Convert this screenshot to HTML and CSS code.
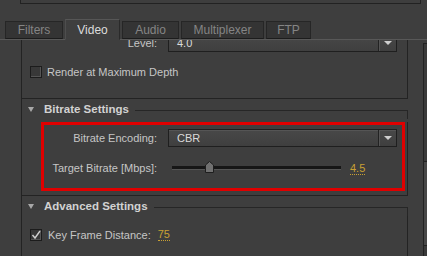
FILE: index.html
```html
<!DOCTYPE html>
<html lang="en">
<head>
    <meta charset="UTF-8">
    <meta name="viewport" content="width=device-width, initial-scale=1.0">
    <title>Export Settings - Video</title>
    <link rel="stylesheet" href="styles.css">
</head>
<body>
    <div class="window">
        <div class="top-box"></div>

        <div class="tabs">
            <div class="tab tab-filters">Filters</div>
            <div class="tab tab-video active">Video</div>
            <div class="tab tab-audio">Audio</div>
            <div class="tab tab-mux">Multiplexer</div>
            <div class="tab tab-ftp">FTP</div>
        </div>

        <div class="panel">
            <div class="scroll">
                <div class="section first">
                    <div class="field">
                        <span class="label wide">Level:</span>
                        <div class="select"><span class="select-value">4.0</span><span class="select-btn"><i class="arrow"></i></span></div>
                    </div>
                    <div class="check-row render-row">
                        <span class="checkbox"></span>
                        <span class="check-label">Render at Maximum Depth</span>
                    </div>
                </div>

                <div class="section">
                    <div class="section-head">
                        <span class="twisty"></span>
                        <span class="section-title">Bitrate Settings</span>
                        <span class="rule"></span>
                    </div>
                    <div class="section-body">
                        <div class="highlight">
                            <div class="field">
                                <span class="label">Bitrate Encoding:</span>
                                <div class="select"><span class="select-value">CBR</span><span class="select-btn"><i class="arrow"></i></span></div>
                            </div>
                            <div class="field slider-row">
                                <span class="label">Target Bitrate [Mbps]:</span>
                                <div class="slider">
                                    <div class="track"></div>
                                    <svg class="thumb" width="9" height="12" viewBox="0 0 9 12">
                                        <path d="M4.5 0.5 L8.5 4 L8.5 11.5 L0.5 11.5 L0.5 4 Z" fill="#707070" stroke="#1e1e1e"/>
                                    </svg>
                                </div>
                                <span class="value">4.5</span>
                            </div>
                        </div>
                    </div>
                </div>

                <div class="section">
                    <div class="section-head">
                        <span class="twisty"></span>
                        <span class="section-title">Advanced Settings</span>
                        <span class="rule"></span>
                    </div>
                    <div class="section-body">
                        <div class="check-row keyframe-row">
                            <span class="checkbox checked">
                                <svg width="10" height="10" viewBox="0 0 10 10">
                                    <path d="M1.5 5 L4 8 L9 1" fill="none" stroke="#cfcfcf" stroke-width="1.4"/>
                                </svg>
                            </span>
                            <span class="check-label">Key Frame Distance:</span>
                            <span class="value">75</span>
                        </div>
                    </div>
                </div>
            </div>
            <div class="scrollbar"><div class="scroll-thumb"></div></div>
        </div>
    </div>
</body>
</html>
```

FILE: styles.css
```css
* {
    margin: 0;
    padding: 0;
    box-sizing: border-box;
}

body {
    background: #fff;
    font-family: 'Liberation Sans', Arial, sans-serif;
    font-size: 11px;
    color: #c6c6c6;
}

.window {
    width: 427px;
    height: 256px;
    background: #3e3e3e;
    overflow: hidden;
}

.top-box {
    margin-left: 20px;
    width: 401px;
    height: 4px;
    border: 1px solid #222;
    border-top: none;
}

/* tabs */
.tabs {
    display: flex;
    align-items: flex-end;
    gap: 2px;
    height: 20px;
    margin-top: 15px;
    padding-left: 5px;
}

.tab {
    height: 18px;
    display: flex;
    align-items: center;
    justify-content: center;
    background: #343434;
    border: 1px solid #262626;
    border-bottom-color: #1c1c1c;
    color: #858585;
    font-size: 12px;
}

.tab-filters { width: 58px; }
.tab-video { width: 55px; }
.tab-audio { width: 57px; }
.tab-mux { width: 83px; }
.tab-ftp { width: 45px; }

.tab.active {
    height: 21px;
    margin-bottom: -1px;
    background: #3f3f3f;
    border-color: #565656 #2a2a2a transparent #4e4e4e;
    color: #dcdcdc;
    position: relative;
    z-index: 1;
}

.panel {
    display: flex;
    height: 217px;
    border-top: 1px solid #585858;
}

.scroll {
    flex: 1;
    overflow: hidden;
}

.scrollbar {
    width: 4px;
    margin-top: 3px;
    border-left: 1px solid #222;
    border-top: 1px solid #222;
    background: #3a3a3a;
    padding-top: 117px;
}

.scroll-thumb {
    height: 85px;
    border-top: 1px solid #222;
    border-bottom: 1px solid #222;
    background: #474747;
}

/* sections */
.section {
    margin-left: 21px;
    width: 387px;
    border-left: 1px solid #232323;
}

.section.first {
    margin-top: -10px;
    border-right: 1px solid #232323;
    border-bottom: 1px solid #232323;
    padding: 4px 0 20px;
}

.section-head {
    display: flex;
    height: 20px;
    padding-left: 6px;
}

.twisty {
    align-self: center;
    width: 0;
    height: 0;
    border-left: 3px solid transparent;
    border-right: 3px solid transparent;
    border-top: 5px solid #a8a8a8;
    margin-right: 10px;
}

.section-title {
    align-self: center;
    font-weight: bold;
    color: #d2d2d2;
    font-size: 11.5px;
}

.rule {
    flex: 1;
    margin-top: 11px;
    margin-left: 6px;
    border-top: 1px solid #262626;
    border-right: 1px solid #262626;
}

.section-body {
    border-right: 1px solid #232323;
    border-bottom: 1px solid #232323;
}

/* fields */
.field {
    display: flex;
    align-items: center;
    gap: 11px;
}

.label {
    width: 113px;
    text-align: right;
    white-space: nowrap;
}

.label.wide {
    width: 135px;
}

.select {
    width: 229px;
    height: 18px;
    display: flex;
    align-items: center;
    background: linear-gradient(#484848, #3f3f3f);
    border: 1px solid #1f1f1f;
    box-shadow: inset 0 1px 0 #555;
    color: #dadada;
}

.select-value {
    flex: 1;
    padding-left: 8px;
}

.select-btn {
    width: 18px;
    height: 100%;
    display: flex;
    align-items: center;
    justify-content: center;
    border-left: 1px solid #222;
    box-shadow: inset 1px 0 0 #555;
}

.arrow {
    width: 0;
    height: 0;
    border-left: 4px solid transparent;
    border-right: 4px solid transparent;
    border-top: 4px solid #cfcfcf;
}

.highlight {
    margin: 3px 2px 4px 19px;
    height: 69px;
    border: 3px solid #e00000;
    padding-top: 4px;
}

.slider-row {
    height: 20px;
    margin-top: 11px;
}

.slider {
    width: 178px;
    height: 20px;
    display: flex;
    align-items: center;
    padding: 0 5px 0 4px;
    position: relative;
}

.track {
    flex: 1;
    height: 4px;
    background: #161616;
    border-bottom: 1px solid #555;
}

.thumb {
    position: absolute;
    left: 37px;
    top: 3px;
}

.value {
    color: #c9a033;
    border-bottom: 1px dotted #c9a033;
    line-height: 12px;
}

.slider-row .value {
    margin-left: -7px;
}

/* check rows */
.check-row {
    display: flex;
    align-items: center;
    padding-left: 8px;
}

.render-row {
    margin-top: 14px;
}

.keyframe-row {
    padding-top: 12px;
    padding-bottom: 20px;
}

.checkbox {
    width: 12px;
    height: 12px;
    display: flex;
    align-items: center;
    justify-content: center;
    background: #383838;
    border: 1px solid #1c1c1c;
    box-shadow: inset -1px -1px 0 #555;
    margin-right: 5px;
}

.keyframe-row .checkbox {
    margin-right: 6px;
}

.keyframe-row .value {
    margin-left: 7px;
}
```
